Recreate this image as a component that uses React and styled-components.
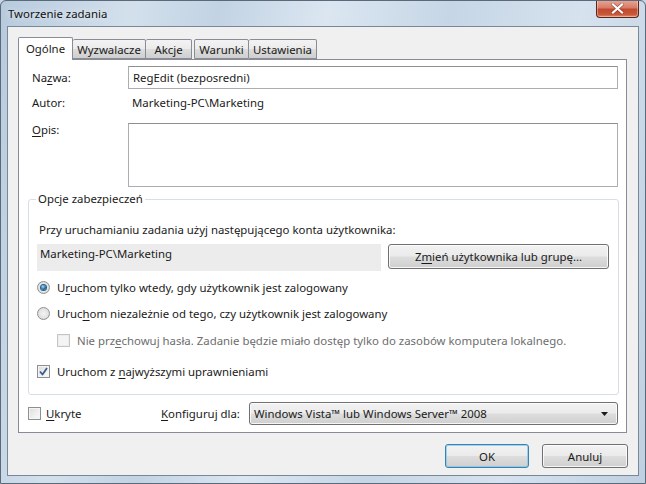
import React from "react";
import styled, { createGlobalStyle } from "styled-components";

const Global = createGlobalStyle`
  html, body { margin: 0; padding: 0; background: #c9d7e5; }
  body { width: 646px; height: 484px; overflow: hidden; }
  * { box-sizing: border-box; }
`;

const FONT = `"Noto Sans", "Open Sans", sans-serif`;
const FS = "11.4px";

const Window = styled.div`
  width: 646px;
  height: 484px;
  display: flex;
  flex-direction: column;
  font-family: ${FONT};
  font-size: ${FS};
  color: #1a1a1a;
  background: linear-gradient(100deg, #b7cadd 0%, #d3e0ec 18%, #c2d3e4 30%, #dbe6f1 45%, #c6d6e6 62%, #d6e2ee 80%, #bfd0e2 100%);
  border: 1px solid #5a6a7a;
  border-radius: 6px 6px 0 0;
  overflow: hidden;
`;

const TitleBar = styled.div`
  height: 25px;
  display: flex;
  align-items: flex-start;
  justify-content: space-between;
  padding: 0 6px 0 7px;
`;

const Title = styled.div`
  padding-top: 5px;
  color: #111;
  text-shadow: 0 0 6px rgba(255,255,255,0.9);
`;

const CloseButton = styled.div`
  width: 43px;
  height: 18px;
  margin-top: -1px;
  border: 1px solid #5e2418;
  border-top: none;
  border-radius: 0 0 4px 4px;
  background: linear-gradient(#e9a898 0%, #d87c66 45%, #c14a2f 55%, #c9583a 85%, #df8f6f 100%);
  box-shadow: inset 0 0 0 1px rgba(255,255,255,0.35);
  display: flex;
  align-items: center;
  justify-content: center;
`;

const Client = styled.div`
  flex: 1;
  margin: 0 6px 7px 6px;
  background: #f0f0f0;
  border: 1px solid #7a8896;
  display: flex;
  flex-direction: column;
  padding: 10px 11px 0 10px;
`;

const TabBar = styled.div`
  display: flex;
  align-items: flex-end;
  height: 22px;
  position: relative;
  z-index: 1;
`;

const Tab = styled.div`
  width: ${(p) => p.$w}px;
  height: ${(p) => (p.$active ? "23px" : "20px")};
  margin-bottom: ${(p) => (p.$active ? "-1px" : "0")};
  padding-bottom: ${(p) => (p.$active ? "2px" : "0")};
  margin-left: ${(p) => (p.$gap ? "2px" : "0")};
  display: flex;
  align-items: center;
  justify-content: center;
  white-space: nowrap;
  border: 1px solid #898c95;
  border-bottom: ${(p) => (p.$active ? "none" : "1px solid #898c95")};
  border-left: ${(p) => (p.$noLeft ? "none" : "1px solid #898c95")};
  border-radius: 2px 2px 0 0;
  background: ${(p) => (p.$active ? "#fff" : "linear-gradient(#f3f3f3 0%, #ebebeb 50%, #dddddd 51%, #cfcfcf 100%)")};
`;

const Panel = styled.div`
  height: 374px;
  background: #fff;
  border: 1px solid #898c95;
  padding: 6px 8px 0 9px;
  display: flex;
  flex-direction: column;
`;

const Row = styled.div`
  display: flex;
  align-items: ${(p) => p.$align || "center"};
  height: ${(p) => p.$h}px;
`;

const Label = styled.div`
  width: 100px;
  flex: none;
  padding-left: 4px;
  line-height: 14px;
  margin-top: ${(p) => p.$mt || 0}px;
`;

const TextInput = styled.div`
  flex: 1;
  height: ${(p) => p.$h || 23}px;
  border: 1px solid #abadb3;
  border-top-color: #8e8f8f;
  background: #fff;
  padding: 3px 4px;
`;

const Value = styled.div`
  padding-left: 4px;
  line-height: 20px;
  margin-top: 4px;
`;

const U = styled.span`
  text-decoration: underline;
  text-underline-offset: 2px;
`;

const Group = styled.fieldset`
  margin: 4px 0 0 0;
  border: 1px solid #d5dfe5;
  border-radius: 3px;
  padding: 15px 9px 0 8px;
  height: 204px;
  display: flex;
  flex-direction: column;
`;

const Legend = styled.legend`
  padding: 0 2px;
  margin-left: -1px;
  line-height: 16px;
`;

const Text = styled.div`
  padding-left: 2px;
  line-height: 16px;
`;

const AccountRow = styled.div`
  display: flex;
  align-items: flex-start;
  gap: 7px;
  margin-top: 6px;
`;

const ReadOnly = styled.div`
  width: 344px;
  height: 27px;
  background: #ececec;
  padding: 2px 3px;
  line-height: 16px;
`;

const Button = styled.div`
  height: ${(p) => p.$h || 25}px;
  width: ${(p) => p.$w}px;
  border: 1px solid ${(p) => (p.$default ? "#3c7fb1" : "#707070")};
  border-radius: 3px;
  background: linear-gradient(#f2f2f2 0%, #ebebeb 48%, #dddddd 52%, #cfcfcf 100%);
  box-shadow: inset 0 0 0 1px ${(p) => (p.$default ? "rgba(120,200,240,0.7)" : "rgba(255,255,255,0.8)")};
  display: flex;
  align-items: center;
  justify-content: center;
`;

const Option = styled.div`
  display: flex;
  align-items: center;
  gap: ${(p) => p.$gap || 7}px;
  margin-top: ${(p) => p.$mt}px;
  margin-left: ${(p) => p.$ml || 0}px;
  width: ${(p) => (p.$w ? `${p.$w}px` : "auto")};
  flex: none;
  height: 16px;
  color: ${(p) => (p.$disabled ? "#6d6d6d" : "inherit")};
`;

const Radio = styled.span`
  width: 13px;
  height: 13px;
  border-radius: 50%;
  border: 1px solid #8e8f8f;
  background: radial-gradient(circle at 50% 50%, #f4f4f4 0%, #e2e2e2 60%, #cfcfcf 100%);
  display: flex;
  align-items: center;
  justify-content: center;
  flex: none;
  &::after {
    content: "";
    width: 5px;
    height: 5px;
    border-radius: 50%;
    display: ${(p) => (p.$on ? "block" : "none")};
    background: radial-gradient(circle at 40% 35%, #a6dcf7 0%, #1d6fa8 55%, #0e3f66 100%);
    box-shadow: 0 0 0 1px #2a5f87;
  }
`;

const Check = styled.span`
  width: 13px;
  height: 13px;
  border: 1px solid ${(p) => (p.$disabled ? "#c5c5c5" : "#8e8f8f")};
  background: ${(p) => (p.$disabled ? "#f4f4f4" : "linear-gradient(135deg, #dcdcdc 0%, #f0f0f0 60%, #fbfbfb 100%)")};
  box-shadow: inset 0 0 0 1px ${(p) => (p.$disabled ? "#ececec" : "#f4f4f4")};
  display: flex;
  align-items: center;
  justify-content: center;
  flex: none;
`;

const BottomRow = styled.div`
  display: flex;
  align-items: center;
  margin-top: 7px;
  height: 23px;
`;

const Konf = styled.div`
  width: 88px;
  flex: none;
`;

const Select = styled.div`
  flex: 1;
  height: 23px;
  border: 1px solid #707070;
  border-radius: 3px;
  background: linear-gradient(#f2f2f2 0%, #ebebeb 48%, #dddddd 52%, #cfcfcf 100%);
  box-shadow: inset 0 0 0 1px rgba(255,255,255,0.8);
  display: flex;
  align-items: center;
  justify-content: space-between;
  padding: 0 9px 0 4px;
`;

const Footer = styled.div`
  display: flex;
  justify-content: flex-end;
  gap: 13px;
  margin-top: 11px;
  margin-right: -1px;
`;

const CheckMark = () => (
  <svg width="9" height="9" viewBox="0 0 9 9">
    <path d="M1 4.5 L3.5 7.5 L8 1" fill="none" stroke="#3a5d8c" strokeWidth="1.8" strokeLinejoin="round" />
  </svg>
);

export default function App() {
  return (
    <>
      <Global />
      <Window>
        <TitleBar>
          <Title>Tworzenie zadania</Title>
          <CloseButton>
            <svg width="13" height="11" viewBox="0 0 13 11">
              <path d="M2 1.5 L11 9.5 M11 1.5 L2 9.5" stroke="#5a1a10" strokeWidth="3.4" strokeLinecap="square" opacity="0.5" />
              <path d="M2 1.5 L11 9.5 M11 1.5 L2 9.5" stroke="#fff" strokeWidth="2.2" strokeLinecap="square" />
            </svg>
          </CloseButton>
        </TitleBar>
        <Client>
          <TabBar>
            <Tab $active $w={55}>Ogólne</Tab>
            <Tab $noLeft $w={73}>Wyzwalacze</Tab>
            <Tab $noLeft $w={46}>Akcje</Tab>
            <Tab $gap $w={55}>Warunki</Tab>
            <Tab $noLeft $w={68}>Ustawienia</Tab>
          </TabBar>
          <Panel>
            <Row $h={23}>
              <Label>Na<U>z</U>wa:</Label>
              <TextInput>RegEdit (bezposredni)</TextInput>
            </Row>
            <Row $h={34} $align="flex-start">
              <Label $mt={7}>Autor:</Label>
              <Value>Marketing-PC\Marketing</Value>
            </Row>
            <Row $h={64} $align="flex-start">
              <Label $mt={0}><U>O</U>pis:</Label>
              <TextInput $h={64} />
            </Row>
            <Group>
              <Legend>Opcje zabezpieczeń</Legend>
              <Text>Przy uruchamianiu zadania użyj następującego konta użytkownika:</Text>
              <AccountRow>
                <ReadOnly>Marketing-PC\Marketing</ReadOnly>
                <Button $w={221}>Z<U>m</U>ień użytkownika lub grupę...</Button>
              </AccountRow>
              <Option $mt={8}>
                <Radio $on />
                <span>U<U>r</U>uchom tylko wtedy, gdy użytkownik jest zalogowany</span>
              </Option>
              <Option $mt={10}>
                <Radio />
                <span>Uruc<U>h</U>om niezależnie od tego, czy użytkownik jest zalogowany</span>
              </Option>
              <Option $mt={11} $ml={20} $disabled>
                <Check $disabled />
                <span>Nie prz<U>e</U>chowuj hasła. Zadanie będzie miało dostęp tylko do zasobów komputera lokalnego.</span>
              </Option>
              <Option $mt={15}>
                <Check><CheckMark /></Check>
                <span>Uruchom z <U>n</U>ajwyższymi uprawnieniami</span>
              </Option>
            </Group>
            <BottomRow>
              <Option $mt={0} $w={133} $gap={5}>
                <Check />
                <span><U>U</U>kryte</span>
              </Option>
              <Konf><U>K</U>onfiguruj dla:</Konf>
              <Select>
                <span>Windows Vista™ lub Windows Server™ 2008</span>
                <svg width="7" height="4" viewBox="0 0 7 4"><path d="M0 0 H7 L3.5 4 Z" fill="#1a1a1a" /></svg>
              </Select>
            </BottomRow>
          </Panel>
          <Footer>
            <Button $w={84} $h={24} $default>OK</Button>
            <Button $w={86} $h={24}>Anuluj</Button>
          </Footer>
        </Client>
      </Window>
    </>
  );
}
